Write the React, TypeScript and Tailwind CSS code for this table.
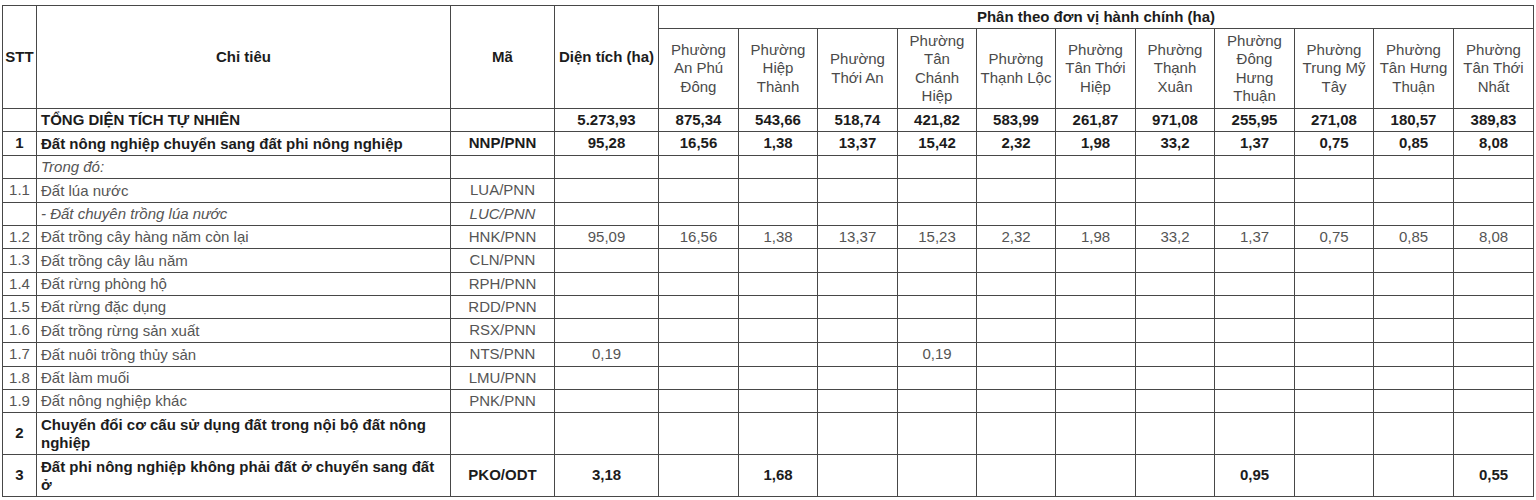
import React from "react";

type Row = {
  stt: string;
  name: React.ReactNode;
  code: string;
  total: string;
  vals: string[];
  kind: "bold" | "normal" | "italic";
  codeItalic?: boolean;
};

const E = ["", "", "", "", "", "", "", "", "", "", ""];

const rows: Row[] = [
  {
    stt: "",
    name: "TỔNG DIỆN TÍCH TỰ NHIÊN",
    code: "",
    total: "5.273,93",
    vals: ["875,34", "543,66", "518,74", "421,82", "583,99", "261,87", "971,08", "255,95", "271,08", "180,57", "389,83"],
    kind: "bold",
  },
  {
    stt: "1",
    name: "Đất nông nghiệp chuyển sang đất phi nông nghiệp",
    code: "NNP/PNN",
    total: "95,28",
    vals: ["16,56", "1,38", "13,37", "15,42", "2,32", "1,98", "33,2", "1,37", "0,75", "0,85", "8,08"],
    kind: "bold",
  },
  { stt: "", name: "Trong đó:", code: "", total: "", vals: E, kind: "italic" },
  { stt: "1.1", name: "Đất lúa nước", code: "LUA/PNN", total: "", vals: E, kind: "normal" },
  { stt: "", name: "- Đất chuyên trồng lúa nước", code: "LUC/PNN", total: "", vals: E, kind: "italic", codeItalic: true },
  {
    stt: "1.2",
    name: "Đất trồng cây hàng năm còn lại",
    code: "HNK/PNN",
    total: "95,09",
    vals: ["16,56", "1,38", "13,37", "15,23", "2,32", "1,98", "33,2", "1,37", "0,75", "0,85", "8,08"],
    kind: "normal",
  },
  { stt: "1.3", name: "Đất trồng cây lâu năm", code: "CLN/PNN", total: "", vals: E, kind: "normal" },
  { stt: "1.4", name: "Đất rừng phòng hộ", code: "RPH/PNN", total: "", vals: E, kind: "normal" },
  { stt: "1.5", name: "Đất rừng đặc dụng", code: "RDD/PNN", total: "", vals: E, kind: "normal" },
  { stt: "1.6", name: "Đất trồng rừng sản xuất", code: "RSX/PNN", total: "", vals: E, kind: "normal" },
  {
    stt: "1.7",
    name: "Đất nuôi trồng thủy sản",
    code: "NTS/PNN",
    total: "0,19",
    vals: ["", "", "", "0,19", "", "", "", "", "", "", ""],
    kind: "normal",
  },
  { stt: "1.8", name: "Đất làm muối", code: "LMU/PNN", total: "", vals: E, kind: "normal" },
  { stt: "1.9", name: "Đất nông nghiệp khác", code: "PNK/PNN", total: "", vals: E, kind: "normal" },
  {
    stt: "2",
    name: (
      <>
        Chuyển đổi cơ cấu sử dụng đất trong nội bộ đất nông
        <br />
        nghiệp
      </>
    ),
    code: "",
    total: "",
    vals: E,
    kind: "bold",
  },
  {
    stt: "3",
    name: (
      <>
        Đất phi nông nghiệp không phải đất ở chuyển sang đất
        <br />ở
      </>
    ),
    code: "PKO/ODT",
    total: "3,18",
    vals: ["", "1,68", "", "", "", "", "", "0,95", "", "", "0,55"],
    kind: "bold",
  },
];

const wards: string[][] = [
  ["Phường", "An Phú", "Đông"],
  ["Phường", "Hiệp", "Thành"],
  ["Phường", "Thới An"],
  ["Phường", "Tân", "Chánh", "Hiệp"],
  ["Phường", "Thạnh Lộc"],
  ["Phường", "Tân Thới", "Hiệp"],
  ["Phường", "Thạnh", "Xuân"],
  ["Phường", "Đông", "Hưng", "Thuận"],
  ["Phường", "Trung Mỹ", "Tây"],
  ["Phường", "Tân Hưng", "Thuận"],
  ["Phường", "Tân Thới", "Nhất"],
];

export default function App() {
  return (
    <div className="min-h-[500px] w-[1536px] bg-white pt-[5px] pl-[2px] font-['Liberation_Sans',Arial,sans-serif] text-[15px]">
      <div className="grid w-fit gap-px bg-[#474747] p-px grid-cols-[33px_413px_103px_103px_79px_78px_79px_78px_78px_79px_78px_79px_78px_79px_79px] grid-rows-[22px_79px_22px_23px_22px_23px_22px_22px_23px_22px_22px_23px_23px_22px_22px_41px_41px]">
        {/* Header */}
        <div className="row-span-2 flex items-center justify-center bg-white font-bold text-[#1c1c1c]">STT</div>
        <div className="row-span-2 flex items-center justify-center bg-white font-bold text-[#1c1c1c]">Chỉ tiêu</div>
        <div className="row-span-2 flex items-center justify-center bg-white font-bold text-[#1c1c1c]">Mã</div>
        <div className="row-span-2 flex items-center justify-center whitespace-nowrap bg-white font-bold text-[#1c1c1c]">
          Diện tích (ha)
        </div>
        <div className="col-span-11 flex items-center justify-center bg-white font-bold text-[#1c1c1c]">
          Phân theo đơn vị hành chính (ha)
        </div>
        {wards.map((w, i) => (
          <div
            key={i}
            className="flex flex-col items-center justify-center whitespace-nowrap bg-white text-center leading-[18.5px] text-[#4a4a4a]"
          >
            {w.map((l, j) => (
              <span key={j}>{l}</span>
            ))}
          </div>
        ))}

        {/* Body */}
        {rows.map((r, i) => {
          const color = r.kind === "bold" ? "font-bold text-[#1c1c1c]" : "text-[#555555]";
          const nameStyle =
            r.kind === "bold"
              ? "font-bold text-[#1c1c1c]"
              : r.kind === "italic"
              ? "italic text-[#555555]"
              : "text-[#555555]";
          return (
            <React.Fragment key={i}>
              <div className={`flex items-center justify-center bg-white ${color}`}>{r.stt}</div>
              <div className={`flex items-center bg-white px-1 leading-[18px] ${nameStyle}`}>
                <span>{r.name}</span>
              </div>
              <div className={`flex items-center justify-center bg-white ${color} ${r.codeItalic ? "italic" : ""}`}>
                {r.code}
              </div>
              <div className={`flex items-center justify-center bg-white ${color}`}>{r.total}</div>
              {r.vals.map((v, j) => (
                <div key={j} className={`flex items-center justify-center bg-white ${color}`}>
                  {v}
                </div>
              ))}
            </React.Fragment>
          );
        })}
      </div>
    </div>
  );
}
